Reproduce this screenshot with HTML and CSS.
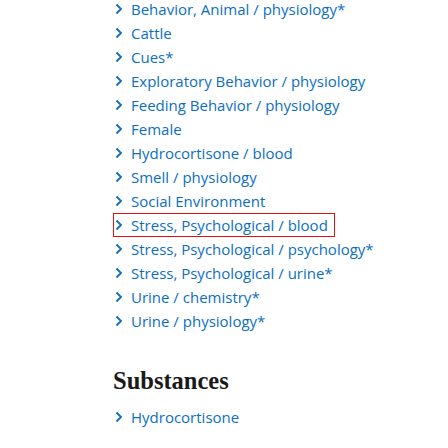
FILE: index.html
```html
<!DOCTYPE html>
<html>
<head>
<meta charset="utf-8">
<link rel="stylesheet" href="styles.css">
</head>
<body>
<div class="page">
  <ul class="terms">
    <li><a class="term" href="#"><svg class="chev" viewBox="0 0 8 12"><polyline points="1.5,1.5 6,6 1.5,10.5"/></svg>Behavior, Animal / physiology*</a></li>
    <li><a class="term" href="#"><svg class="chev" viewBox="0 0 8 12"><polyline points="1.5,1.5 6,6 1.5,10.5"/></svg>Cattle</a></li>
    <li><a class="term" href="#"><svg class="chev" viewBox="0 0 8 12"><polyline points="1.5,1.5 6,6 1.5,10.5"/></svg>Cues*</a></li>
    <li><a class="term" href="#"><svg class="chev" viewBox="0 0 8 12"><polyline points="1.5,1.5 6,6 1.5,10.5"/></svg>Exploratory Behavior / physiology</a></li>
    <li><a class="term" href="#"><svg class="chev" viewBox="0 0 8 12"><polyline points="1.5,1.5 6,6 1.5,10.5"/></svg>Feeding Behavior / physiology</a></li>
    <li><a class="term" href="#"><svg class="chev" viewBox="0 0 8 12"><polyline points="1.5,1.5 6,6 1.5,10.5"/></svg>Female</a></li>
    <li><a class="term" href="#"><svg class="chev" viewBox="0 0 8 12"><polyline points="1.5,1.5 6,6 1.5,10.5"/></svg>Hydrocortisone / blood</a></li>
    <li><a class="term" href="#"><svg class="chev" viewBox="0 0 8 12"><polyline points="1.5,1.5 6,6 1.5,10.5"/></svg>Smell / physiology</a></li>
    <li><a class="term" href="#"><svg class="chev" viewBox="0 0 8 12"><polyline points="1.5,1.5 6,6 1.5,10.5"/></svg>Social Environment</a></li>
    <li><a class="term focused" href="#"><svg class="chev" viewBox="0 0 8 12"><polyline points="1.5,1.5 6,6 1.5,10.5"/></svg>Stress, Psychological / blood</a></li>
    <li><a class="term" href="#"><svg class="chev" viewBox="0 0 8 12"><polyline points="1.5,1.5 6,6 1.5,10.5"/></svg>Stress, Psychological / psychology*</a></li>
    <li><a class="term" href="#"><svg class="chev" viewBox="0 0 8 12"><polyline points="1.5,1.5 6,6 1.5,10.5"/></svg>Stress, Psychological / urine*</a></li>
    <li><a class="term" href="#"><svg class="chev" viewBox="0 0 8 12"><polyline points="1.5,1.5 6,6 1.5,10.5"/></svg>Urine / chemistry*</a></li>
    <li><a class="term" href="#"><svg class="chev" viewBox="0 0 8 12"><polyline points="1.5,1.5 6,6 1.5,10.5"/></svg>Urine / physiology*</a></li>
  </ul>
  <h2 class="heading">Substances</h2>
  <ul class="terms">
    <li><a class="term" href="#"><svg class="chev" viewBox="0 0 8 12"><polyline points="1.5,1.5 6,6 1.5,10.5"/></svg>Hydrocortisone</a></li>
  </ul>
</div>
</body>
</html>
```
FILE: styles.css
```css
html, body {
  margin: 0;
  padding: 0;
  background: #ffffff;
}
.page {
  padding: 0 0 0 113px;
  margin-top: -3px;
}
.terms {
  list-style: none;
  margin: 0;
  padding: 0;
}
.terms li {
  height: 24px;
  display: flex;
  align-items: center;
}
.term {
  display: inline-flex;
  align-items: center;
  font-family: "Open Sans", sans-serif;
  font-size: 15px;
  line-height: 22px;
  color: #0a6fc2;
  text-decoration: none;
  border: 1px solid transparent;
  padding-right: 6px;
}
.term.focused {
  border-color: #e01010;
}
.chev {
  width: 8px;
  height: 12px;
  margin: 0 8px 0 1px;
  fill: none;
  stroke: #0a6fc2;
  stroke-width: 1.8;
}
.heading {
  font-family: "Liberation Serif", serif;
  font-weight: bold;
  font-size: 24.5px;
  color: #1a1a1a;
  margin: 33px 0 9px 0;
  line-height: 30px;
}
```
